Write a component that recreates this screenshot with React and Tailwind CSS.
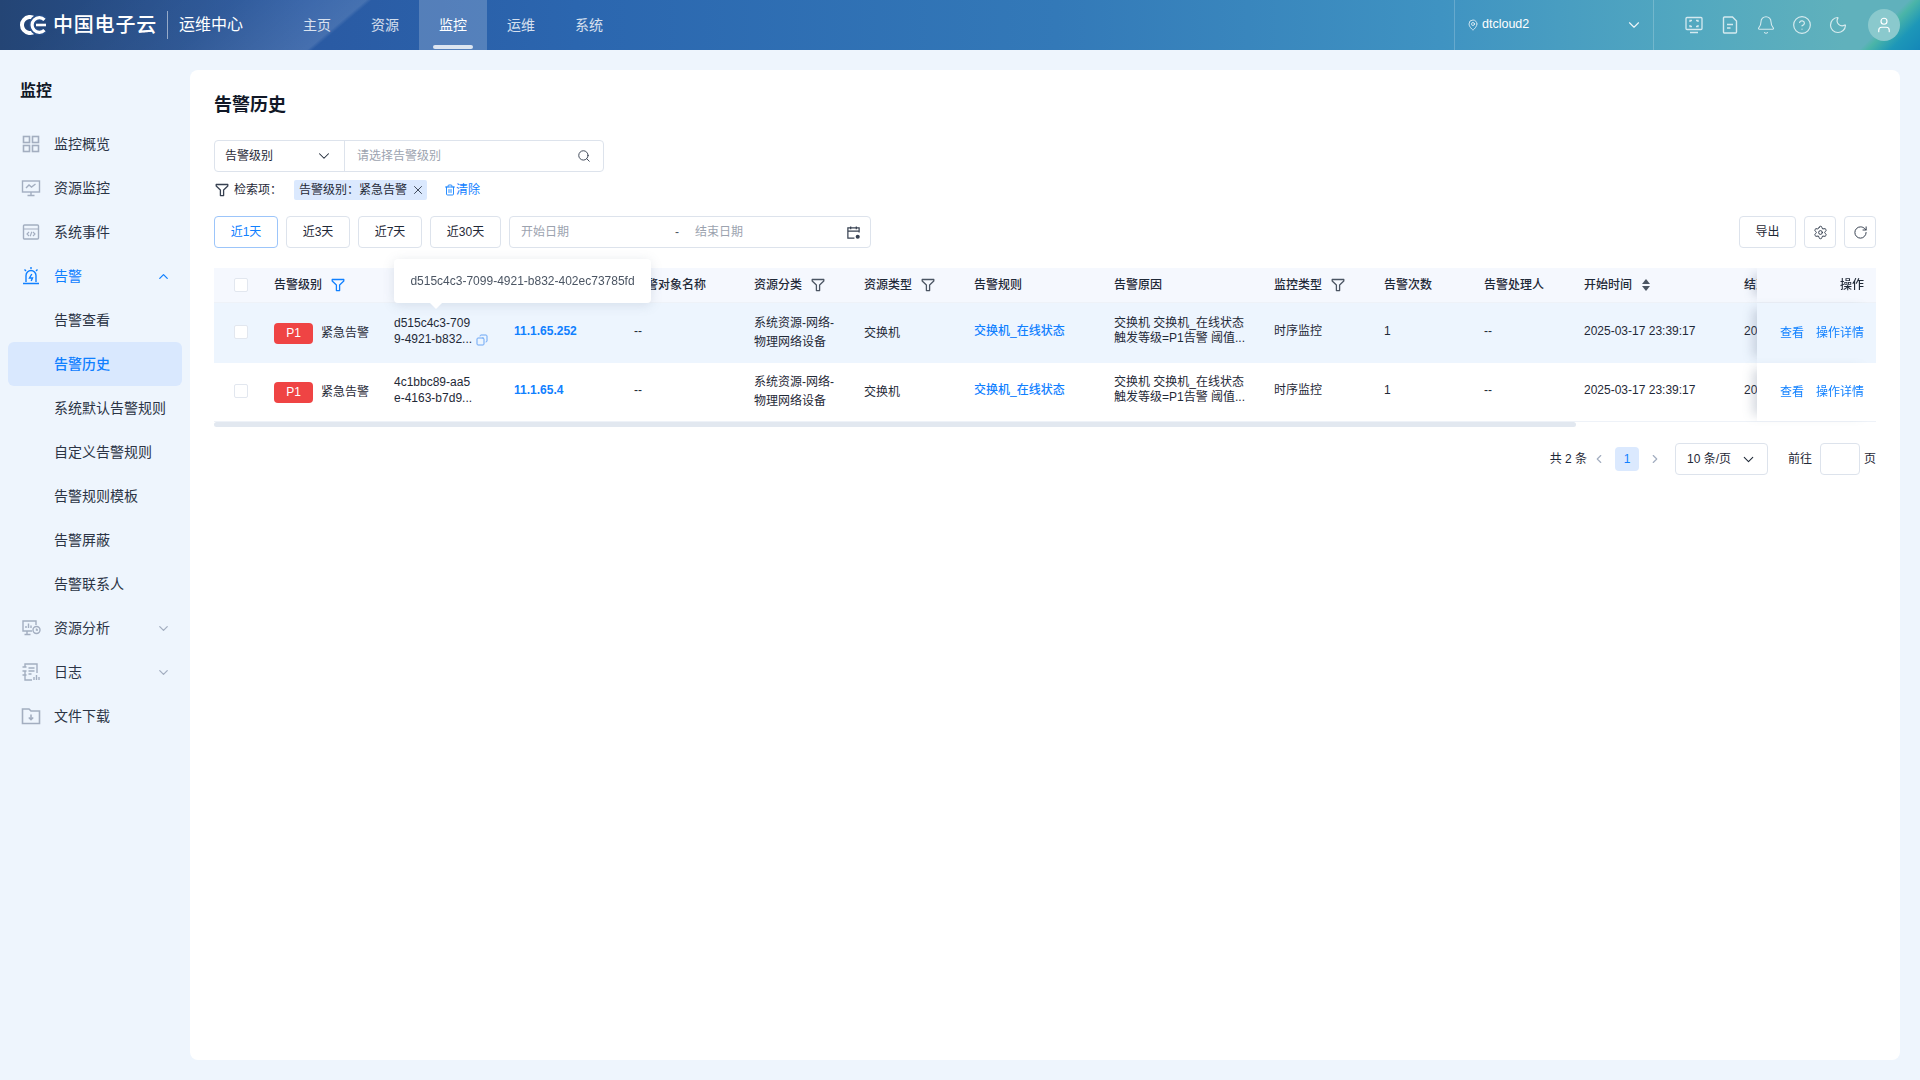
import React from "react";
import { ChevronDown, ChevronUp, ChevronLeft, ChevronRight, Search, X, Trash2, RotateCw, Settings, MapPin, Bell, CircleHelp, Moon, User, Copy } from "lucide-react";

const FONT = "font-['Liberation_Sans','Noto_Sans_CJK_SC',sans-serif]";

const Funnel = ({ className = "" }) => (
  <svg viewBox="0 0 14 14" fill="none" stroke="currentColor" strokeWidth="1.3" className={className}>
    <path d="M1.200 1.500h11.600v1.600L8.600 7v5.600H5.400V7L1.200 3.100z" strokeLinejoin="round" />
  </svg>
);

const NavIcon = ({ name, active }) => {
  const c = active ? "#1080ff" : "#a3aec0";
  const p = { fill: "none", stroke: c, strokeWidth: 1.4 };
  return (
    <svg viewBox="0 0 20 20" width="20" height="20" className="shrink-0">
      {name === "grid" && (
        <g {...p} strokeWidth="1.600">
          <rect x="2.500" y="2.500" width="6" height="6" />
          <rect x="11.500" y="2.500" width="6" height="6" />
          <rect x="2.500" y="11.500" width="6" height="6" />
          <rect x="11.500" y="11.500" width="6" height="6" />
        </g>
      )}
      {name === "monitor" && (
        <g {...p}>
          <rect x="1.500" y="3" width="17" height="11" />
          <path d="M5 10l3-3 2.500 2 4-3M10 14v3M6.500 17.500h7" />
        </g>
      )}
      {name === "event" && (
        <g {...p}>
          <rect x="2.500" y="3" width="15" height="14" rx="1" />
          <path d="M2.500 7h15M8 10l-2 2 2 2M12 10l2 2-2 2M10.800 9.800l-1.600 4.400" strokeWidth="1.100" />
        </g>
      )}
      {name === "alarm" && (
        <g {...p}>
          <path d="M5 16V9.500a5 5 0 0110 0V16M2 17.500h16M10 1v2M3.500 3.500l1.500 1.500M16.500 3.500L15 5" />
          <path d="M10.800 8L8.500 12h3l-1.300 3" />
        </g>
      )}
      {name === "analysis" && (
        <g {...p} strokeWidth="1.400">
          <path d="M11 13H2V3h13v4M6 13v3M3.500 16.500h6M5 10V8M7.500 10V5.500M10 10V7.500" />
          <circle cx="15.500" cy="12" r="3.500" />
          <path d="M15.500 10.500V12h1.500" />
        </g>
      )}
      {name === "log" && (
        <g {...p} strokeWidth="1.400">
          <path d="M4 5V2h12v9M4 9v9h7M1.500 5h4M1.500 9h4M1.500 13h4M7.500 6h6M7.500 9h6M7.500 12h3M13 18v-3M15.500 18v-5M18 18v-3" />
        </g>
      )}
      {name === "download" && (
        <g {...p} strokeWidth="1.600">
          <path d="M1.500 3h6.500l2 2h8.500v12.500h-17zM10 8.500v5M7.800 11.500l2.200 2.200 2.200-2.200" />
        </g>
      )}
    </svg>
  );
};

const menu = [
  { t: "监控概览", i: "grid" },
  { t: "资源监控", i: "monitor" },
  { t: "系统事件", i: "event" },
  { t: "告警", i: "alarm", open: true },
  { t: "告警查看", sub: true },
  { t: "告警历史", sub: true, sel: true },
  { t: "系统默认告警规则", sub: true },
  { t: "自定义告警规则", sub: true },
  { t: "告警规则模板", sub: true },
  { t: "告警屏蔽", sub: true },
  { t: "告警联系人", sub: true },
  { t: "资源分析", i: "analysis", closed: true },
  { t: "日志", i: "log", closed: true },
  { t: "文件下载", i: "download" },
];

function Header() {
  const nav = ["主页", "资源", "监控", "运维", "系统"];
  return (
    <header className="h-[50px] shrink-0 flex items-stretch text-white bg-[linear-gradient(135deg,transparent_0,transparent_96.900%,#4bb5a8_97.300%,#1d97b8_98.500%,#1487b8_100%),linear-gradient(140deg,rgba(255,255,255,0)_4%,rgba(255,255,255,0.04)_12%,rgba(255,255,255,0.13)_18.500%,rgba(255,255,255,0)_18.800%),linear-gradient(90deg,#244575_0%,#2a5aa3_16%,#2b66af_30%,#3379b8_55%,#3f93c2_75%,#52a8c0_88%,#60b1bc_96%)]">
      <div className="w-[283px] flex items-center pl-[20px] shrink-0">
        <svg viewBox="0 0 28 20" width="28" height="20" fill="none" className="-ml-[1px]">
          <path d="M15.500 3.400a8 8 0 100 13.200" stroke="#fff" strokeWidth="4" />
          <path d="M25.500 4.800a7.300 7.300 0 100 10.400" stroke="#29508a" strokeWidth="6.500" />
          <path d="M25.500 4.800a7.300 7.300 0 100 10.400" stroke="#fff" strokeWidth="3.200" />
          <path d="M17 10h10" stroke="#fff" strokeWidth="2.600" />
        </svg>
        <span className="ml-[6px] text-[20px] leading-none font-medium tracking-[0.8px] whitespace-nowrap">中国电子云</span>
        <span className="ml-[10px] w-px h-[28px] bg-white/50" />
        <span className="ml-[11px] text-[16px] whitespace-nowrap">运维中心</span>
      </div>
      <nav className="flex">
        {nav.map((n) => (
          <div key={n} className={`relative w-[68px] flex items-center justify-center text-[14px] ${n === "监控" ? "bg-white/20 text-white" : "text-white/80"}`}>
            {n}
            {n === "监控" && <span className="absolute left-[14px] right-[14px] bottom-[1px] h-[4px] rounded-sm bg-white/80" />}
          </div>
        ))}
      </nav>
      <div className="flex-1" />
      <div className="w-[200px] border-x border-white/20 flex items-center pl-[12px] pr-[10px] shrink-0">
        <MapPin size={12} strokeWidth={1.6} className="text-white/90" />
        <span className="ml-[3px] text-[12.5px] pb-[2px]">dtcloud2</span>
        <ChevronDown size={18} strokeWidth={1.5} className="ml-auto text-white/90" />
      </div>
      <div className="w-[266px] flex items-center pl-[30px] gap-[16px] shrink-0 text-white/75">
        <svg viewBox="0 0 20 20" width="20" height="20" fill="none" stroke="currentColor" strokeWidth="1.300">
          <rect x="2" y="2.500" width="16" height="12" rx="1" />
          <path d="M6 7V5.500h2M12 5.500h2V7M14 10v1.500h-2M8 11.500H6V10M6 17.500h8" />
        </svg>
        <svg viewBox="0 0 20 20" width="20" height="20" fill="none" stroke="currentColor" strokeWidth="1.400">
          <path d="M3.500 3a1 1 0 011-1h8l4 4v11a1 1 0 01-1 1h-11a1 1 0 01-1-1zM7 9.500h6M7 13h3.500" />
        </svg>
        <Bell size={20} strokeWidth={1.3} />
        <CircleHelp size={20} strokeWidth={1.4} />
        <Moon size={20} strokeWidth={1.4} />
        <div className="ml-[4px] w-[32px] h-[32px] rounded-full bg-[#8ac9cd] flex items-center justify-center text-white">
          <User size={18} strokeWidth={1.6} />
        </div>
      </div>
    </header>
  );
}

function Sidebar() {
  return (
    <aside className="w-[190px] shrink-0">
      <div className="h-[72px] pt-[10px] flex items-start pl-[20px] text-[16px] leading-[22px] font-bold text-[#111827] mt-[20px] -mb-[20px]">监控</div>
      <div className="mt-0 flex flex-col">
        {menu.map((m) => (
          <div key={m.t} className={`h-[44px] flex items-center text-[14px] ${m.sel ? "mx-[8px] pl-[46px] rounded-md bg-[#d9e8fe] text-[#1080ff] font-medium" : m.sub ? "pl-[54px] text-[#2b3445]" : "pl-[21px] text-[#2b3445]"}`}>
            {m.i && <NavIcon name={m.i} active={m.open} />}
            <span className={m.i ? `ml-[13px] ${m.open ? "text-[#1080ff]" : ""}` : ""}>{m.t}</span>
            {m.open && <ChevronUp size={15} className="ml-auto mr-[19px] text-[#1080ff]" />}
            {m.closed && <ChevronDown size={15} className="ml-auto mr-[19px] text-[#a3aec0]" />}
          </div>
        ))}
      </div>
    </aside>
  );
}

const COLS = "grid grid-cols-[60px_120px_120px_120px_120px_110px_110px_140px_160px_110px_100px_100px_160px_160px_119px] w-[2028px]";

const rows = [
  { id: ["d515c4c3-709", "9-4921-b832..."], ip: "11.1.65.252", copy: true, h: "h-[60px] bg-[#edf5fe]", op: "bg-[#edf5fe]" },
  { id: ["4c1bbc89-aa5", "e-4163-b7d9..."], ip: "11.1.65.4", h: "h-[58px] bg-white", op: "bg-white" },
];

const Check = () => <span className="block w-[14px] h-[14px] rounded-[2px] border border-[#e2e7ef] bg-white" />;

function HeadCell({ children, icon, sort, blue }) {
  return (
    <div className="flex items-center whitespace-nowrap">
      {children}
      {icon && <Funnel className={`ml-[9px] w-[14px] h-[14px] ${blue ? "text-[#1080ff]" : "text-[#4b5563]"}`} />}
      {sort && (
        <span className="ml-[10px] flex flex-col gap-[2px] text-[#4b5563]">
          <span className="w-0 h-0 border-x-[4px] border-x-transparent border-b-[5px] border-b-current" />
          <span className="w-0 h-0 border-x-[4px] border-x-transparent border-t-[5px] border-t-current" />
        </span>
      )}
    </div>
  );
}

function Table() {
  return (
    <div className="relative mt-[20px]">
      <div className="overflow-hidden">
        <div className={`${COLS} h-[35px] bg-[#f5f8fe] border-b border-[#eef2f8] text-[12px] font-medium text-[#1f2937]`}>
          <div className="flex items-center pl-[20px]"><Check /></div>
          <HeadCell icon blue>告警级别</HeadCell>
          <HeadCell>告警ID</HeadCell>
          <HeadCell>资源IP</HeadCell>
          <HeadCell>告警对象名称</HeadCell>
          <HeadCell icon>资源分类</HeadCell>
          <HeadCell icon>资源类型</HeadCell>
          <HeadCell>告警规则</HeadCell>
          <HeadCell>告警原因</HeadCell>
          <HeadCell icon>监控类型</HeadCell>
          <HeadCell>告警次数</HeadCell>
          <HeadCell>告警处理人</HeadCell>
          <HeadCell sort>开始时间</HeadCell>
          <HeadCell>结束时间</HeadCell>
          <div className="sticky right-0 bg-[#f5f8fe] flex items-center justify-end pr-[12px] shadow-[-10px_0_10px_-6px_rgba(100,116,139,0.28)]">操作</div>
        </div>
        {rows.map((r) => (
          <div key={r.ip} className={`${COLS} ${r.h} text-[12px] text-[#1f2937]`}>
            <div className="flex items-center pl-[20px] pb-[2px]"><Check /></div>
            <div className="flex items-center">
              <span className="w-[39px] h-[21px] rounded-[4px] bg-[#ef4444] text-white flex items-center justify-center">P1</span>
              <span className="ml-[8px]">紧急告警</span>
            </div>
            <div className="flex flex-col justify-center leading-[16px] pb-[5px] whitespace-nowrap">
              <span>{r.id[0]}</span>
              <span className="flex items-center">
                {r.id[1]}
                {r.copy && <Copy size={12} className="ml-[4px] mt-[3px] -scale-x-100 text-[#6ba6f5]" />}
              </span>
            </div>
            <div className="flex items-center pb-[4px] font-bold text-[#1080ff]">{r.ip}</div>
            <div className="flex items-center pb-[4px]">--</div>
            <div className="flex flex-col justify-center leading-[19px]">
              <span>系统资源-网络-</span>
              <span>物理网络设备</span>
            </div>
            <div className="flex items-center">交换机</div>
            <div className="flex items-center pb-[4px] font-medium text-[#1080ff]">交换机_在线状态</div>
            <div className="flex flex-col justify-center leading-[15px] pb-[4px] whitespace-nowrap">
              <span>交换机 交换机_在线状态</span>
              <span>触发等级=P1告警 阈值...</span>
            </div>
            <div className="flex items-center pb-[5px]">时序监控</div>
            <div className="flex items-center pb-[5px]">1</div>
            <div className="flex items-center pb-[5px]">--</div>
            <div className="flex items-center pb-[5px]">2025-03-17 23:39:17</div>
            <div className="flex items-center pb-[5px]">2025-03-17 23:39:17</div>
            <div className={`sticky right-0 ${r.op} flex items-center justify-end gap-[12px] pr-[12px] text-[#1080ff] shadow-[-10px_0_10px_-6px_rgba(100,116,139,0.28)]`}>
              <span>查看</span>
              <span>操作详情</span>
            </div>
          </div>
        ))}
        <div className="h-[6px] bg-white border-t border-[#eef2f8]">
          <div className="w-[1362px] h-[5px] rounded-full bg-[#e2e8f0]" />
        </div>
      </div>
      <div className="absolute left-[180px] -top-[9px] w-[257px] h-[44px] rounded-[4px] bg-white shadow-[0_2px_12px_rgba(100,116,139,0.18)] flex items-center justify-center text-[12px] text-[#4b5563] whitespace-nowrap">
        d515c4c3-7099-4921-b832-402ec73785fd
        <span className="absolute left-[36px] top-full w-0 h-0 border-x-[6px] border-x-transparent border-t-[6px] border-t-white" />
      </div>
    </div>
  );
}

function Button({ children, className = "" }) {
  return (
    <button className={`h-[32px] rounded-[4px] border border-[#dde3ec] bg-white text-[12px] text-[#1f2937] flex items-center justify-center ${className}`}>
      {children}
    </button>
  );
}

export default function App() {
  return (
    <div className={`w-[1920px] h-[1080px] overflow-hidden flex flex-col bg-[#eef5fd] ${FONT}`}>
      <Header />
      <div className="flex flex-1 min-h-0">
        <Sidebar />
        <main className="w-[1710px] h-[990px] mt-[20px] rounded-[8px] bg-white px-[24px] pt-[22px]">
          <h1 className="text-[18px] leading-[26px] font-bold text-[#111827]">告警历史</h1>
          <div className="mt-[22px] flex w-[390px] h-[32px] rounded-[4px] border border-[#dde3ec] text-[12px]">
            <div className="w-[130px] flex items-center pl-[10px] pr-[11px] border-r border-[#dde3ec] text-[#1f2937]">
              告警级别
              <ChevronDown size={18} strokeWidth={1.4} className="ml-auto" />
            </div>
            <div className="flex-1 flex items-center pl-[12px] pr-[12px] text-[#9ca3af]">
              请选择告警级别
              <Search size={14} strokeWidth={1.6} className="ml-auto text-[#374151]" />
            </div>
          </div>
          <div className="mt-[8px] h-[20px] flex items-center text-[12px] text-[#1f2937]">
            <Funnel className="w-[14px] h-[14px] ml-[1px] text-[#374151]" />
            <span className="ml-[5px]">检索项：</span>
            <span className="ml-[12px] h-[20px] w-[133px] flex items-center pl-[5px] bg-[#dbe9fe] rounded-[2px]">
              告警级别：紧急告警
              <X size={14} strokeWidth={1.4} className="ml-[4px]" />
            </span>
            <span className="ml-[17px] flex items-center text-[#1080ff]">
              <Trash2 size={12} strokeWidth={1.8} />
              清除
            </span>
          </div>
          <div className="mt-[16px] flex items-center gap-[8px]">
            <Button className="w-[64px] !border-[#9cc5fa] !text-[#1080ff]">近1天</Button>
            <Button className="w-[64px]">近3天</Button>
            <Button className="w-[64px]">近7天</Button>
            <Button className="w-[71px]">近30天</Button>
            <div className="w-[362px] h-[32px] rounded-[4px] border border-[#dde3ec] flex items-center pl-[11px] pr-[9px] text-[12px] text-[#9ca3af]">
              <span className="w-[154px]">开始日期</span>
              <span className="w-[20px] text-[#4b5563]">-</span>
              <span>结束日期</span>
              <svg viewBox="0 0 16 16" width="15" height="15" fill="none" stroke="#374151" strokeWidth="1.300" className="ml-auto">
                <path d="M14 8V3H2v11h7M2 6.500h12M5 1.500v3M11 1.500v3" />
                <circle cx="12.500" cy="12.500" r="2.200" fill="#374151" stroke="none" />
              </svg>
            </div>
            <div className="flex-1" />
            <Button className="w-[57px]">导出</Button>
            <Button className="w-[32px]"><Settings size={15} strokeWidth={1.6} className="text-[#374151]" /></Button>
            <Button className="w-[32px]"><RotateCw size={15} strokeWidth={1.6} className="text-[#374151]" /></Button>
          </div>
          <Table />
          <div className="mt-[16px] h-[32px] flex items-center justify-end text-[12px] text-[#1f2937]">
            <span>共 2 条</span>
            <ChevronLeft size={14} className="ml-[5px] text-[#a3aec0]" />
            <span className="ml-[9px] w-[24px] h-[24px] rounded-[4px] bg-[#dbe9fe] text-[#1080ff] flex items-center justify-center">1</span>
            <ChevronRight size={14} className="ml-[9px] text-[#a3aec0]" />
            <div className="ml-[13px] w-[93px] h-[32px] rounded-[4px] border border-[#dde3ec] flex items-center pl-[11px] pr-[10px]">
              10 条/页
              <ChevronDown size={17} strokeWidth={1.5} className="ml-auto" />
            </div>
            <span className="ml-[20px]">前往</span>
            <span className="ml-[8px] w-[40px] h-[32px] rounded-[4px] border border-[#dde3ec]" />
            <span className="ml-[4px]">页</span>
          </div>
        </main>
      </div>
    </div>
  );
}
